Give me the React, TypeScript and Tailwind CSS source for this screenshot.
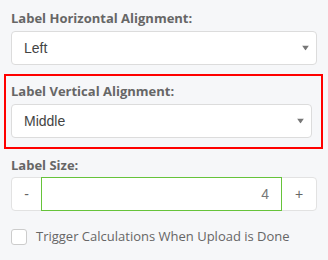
import React, {useState} from 'react';

const labelClass = "block font-['Open_Sans',sans-serif] font-bold text-[13px] leading-[18px] text-[#666666]"

const Caret = () => (
    <svg width="7" height="5" viewBox="0 0 7 5" className="absolute right-[7px] top-1/2 -translate-y-1/2">
        <path d="M0 0 L7 0 L3.5 5 Z" fill="#777777"/>
    </svg>
)

const FakeSelect = ({value}: { value: string }) => (
    <div className="relative h-[34px] w-full bg-white border border-[#dcdcdc] rounded-[4px] flex items-center pl-[12px] font-['Liberation_Sans',Arial,sans-serif] text-[14px] text-[#444444]">
        {value}
        <Caret/>
    </div>
)

const App = () => {
    const [size, setSize] = useState(4)
    const [trigger, setTrigger] = useState(false)

    return (
        <div className="w-[328px] h-[260px] bg-[#f6f7f9] overflow-hidden">
            <div className="px-[11px] pt-[9px]">
                <span className={labelClass}>Label Horizontal Alignment:</span>
                <div className="mt-[4px]">
                    <FakeSelect value="Left"/>
                </div>
            </div>

            <div className="mt-[9px] ml-[4px] mr-[5px] border-2 border-[#ff0000] pl-[5px] pr-[9px] pt-[6px] pb-[9px]">
                <span className={labelClass}>Label Vertical Alignment:</span>
                <div className="mt-[4px]">
                    <FakeSelect value="Middle"/>
                </div>
            </div>

            <div className="px-[11px] pt-[7px]">
                <span className={labelClass}>Label Size:</span>
                <div className="mt-[3px] flex h-[34px] bg-white border border-[#e2e2e2] rounded-[4px] font-['Liberation_Sans',Arial,sans-serif] text-[14px] text-[#666666]">
                    <button onClick={() => setSize(size - 1)}
                            className="w-[29px] flex items-center justify-center">-</button>
                    <div className="flex-1 border border-[#66c33a] -my-px flex items-center justify-end pr-[12px] text-[#777777]">
                        {size}
                    </div>
                    <button onClick={() => setSize(size + 1)}
                            className="w-[34px] flex items-center justify-center">+</button>
                </div>
            </div>

            <div className="px-[11px] mt-[16px] flex items-center gap-[9px] cursor-pointer" onClick={() => setTrigger(!trigger)}>
                <div className="w-[16px] h-[16px] bg-white border border-[#cccccc] rounded-[3px]"/>
                <span className="font-['Open_Sans',sans-serif] text-[13px] text-[#666666]">
                    Trigger Calculations When Upload is Done
                </span>
            </div>
        </div>
    );
};

export default App;
